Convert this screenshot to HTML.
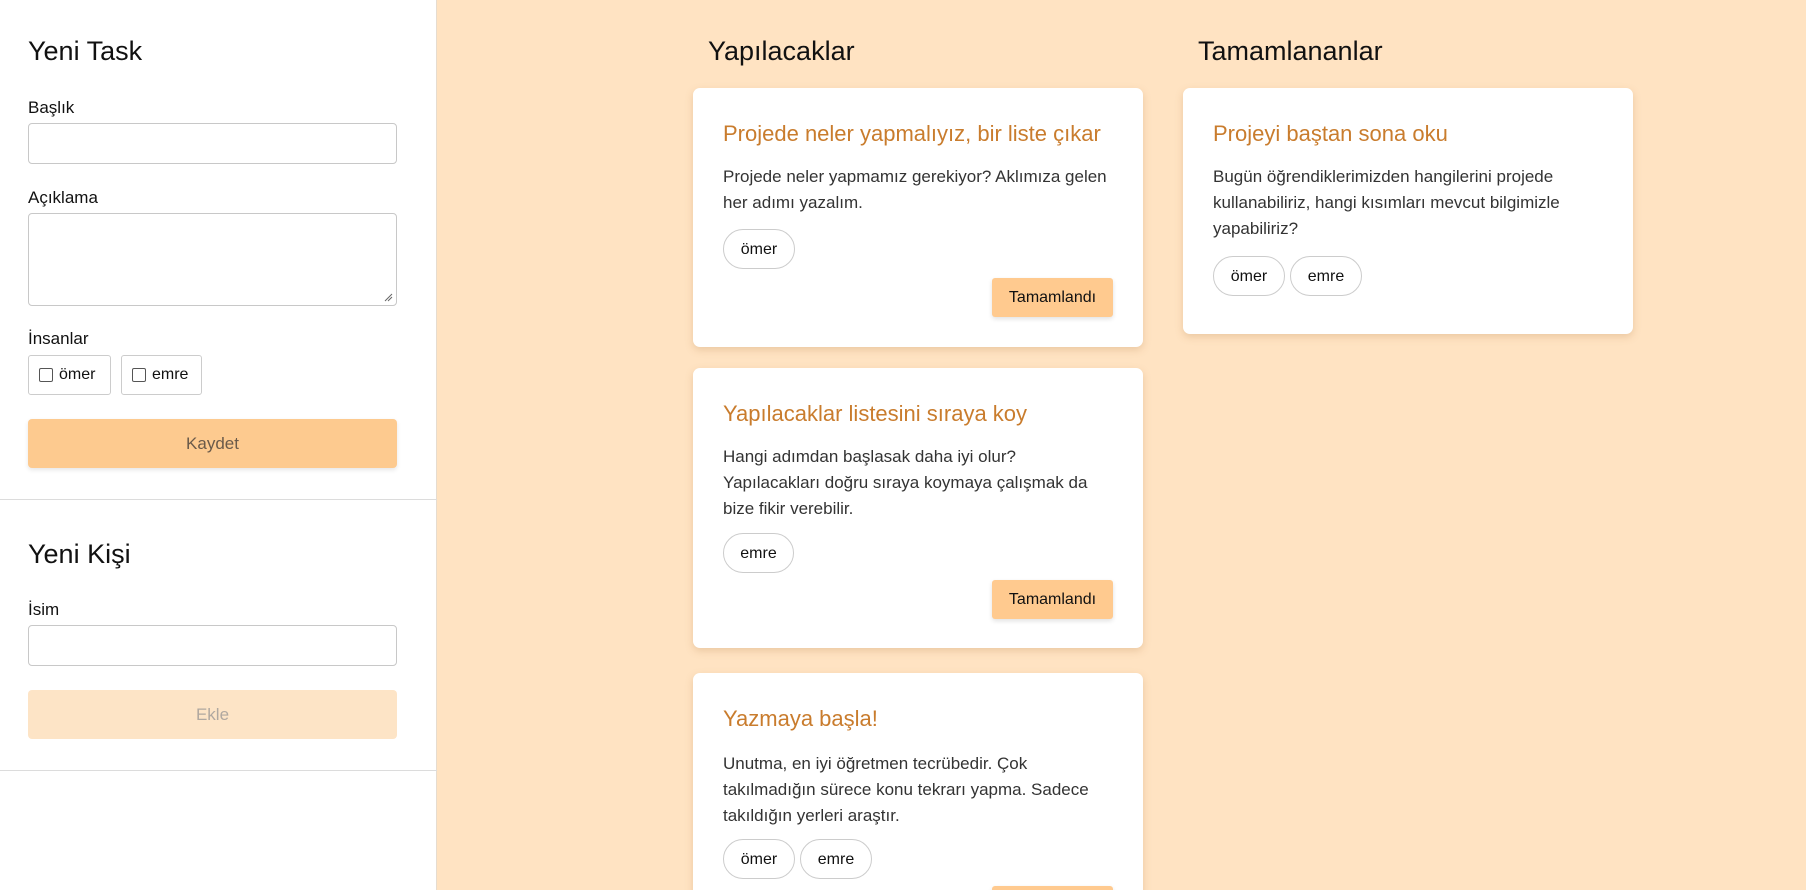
<!DOCTYPE html>
<html style="overflow:hidden;height:890px"><head><meta charset="utf-8"><style>
*{box-sizing:border-box;margin:0;padding:0}
body{width:1806px;height:890px;overflow:hidden;background:#ffe3c2;font-family:"Liberation Sans",sans-serif;position:relative}
.side{position:absolute;left:0;top:0;width:437px;height:890px;background:#fff;border-right:1px solid #e6dccf}
.a{position:absolute;white-space:nowrap}
h2{font-weight:normal;font-size:27px;color:#111}
.lbl{font-size:17px;color:#111}
.inp{position:absolute;left:28px;width:369px;border:1px solid #c8c8c8;border-radius:4px;background:#fff}
.btn{position:absolute;left:28px;width:369px;height:49px;border-radius:4px;display:flex;align-items:center;justify-content:center;font-size:17px}
.hr{position:absolute;left:0;width:437px;height:1px;background:#dcdcdc}
.cb{position:absolute;top:355px;height:40px;border:1px solid #ccc;border-radius:3px;display:flex;align-items:center;padding-left:10px;font-size:16px;color:#111}
.cb i{display:inline-block;width:14px;height:14px;border:1px solid #555;border-radius:2px;margin-right:6px}
.card{position:absolute;background:#fff;border-radius:7px;box-shadow:0 3px 8px rgba(190,140,90,.3)}
.t{position:absolute;left:30px;font-size:22px;color:#c97c2d;white-space:nowrap}
.d{position:absolute;left:30px;font-size:17px;line-height:26px;color:#333;white-space:nowrap}
.chip{position:absolute;height:40px;border:1px solid #ccc;border-radius:20px;font-size:16px;color:#111;display:flex;align-items:center;justify-content:center;padding-top:2px}
.done{position:absolute;left:299px;width:121px;height:39px;background:#ffca8f;border-radius:3px;font-size:16px;color:#111;display:flex;align-items:center;justify-content:center;box-shadow:0 2px 5px rgba(0,0,0,.12)}
</style></head><body>
<div class="side">
<h2 class="a" style="left:28px;top:36px">Yeni Task</h2>
<div class="a lbl" style="left:28px;top:98px">Başlık</div>
<div class="inp" style="top:123px;height:41px"></div>
<div class="a lbl" style="left:28px;top:188px">Açıklama</div>
<div class="inp" style="top:213px;height:93px"><svg style="position:absolute;right:3px;bottom:3px" width="9" height="9"><path d="M1 8L8 1M4 8L8 4" stroke="#666" stroke-width="1"/></svg></div>
<div class="a lbl" style="left:28px;top:329px">İnsanlar</div>
<div class="cb" style="left:28px;width:83px"><i></i>ömer</div>
<div class="cb" style="left:121px;width:81px"><i></i>emre</div>
<div class="btn" style="top:419px;background:#fdca8f;color:#6a5a4a;box-shadow:0 2px 5px rgba(0,0,0,.1)">Kaydet</div>
<div class="hr" style="top:499px"></div>
<h2 class="a" style="left:28px;top:539px">Yeni Kişi</h2>
<div class="a lbl" style="left:28px;top:600px">İsim</div>
<div class="inp" style="top:625px;height:41px"></div>
<div class="btn" style="top:690px;background:#fde4c6;color:#b0a8a0">Ekle</div>
<div class="hr" style="top:770px"></div>
</div>

<h2 class="a" style="left:708px;top:36px">Yapılacaklar</h2>
<h2 class="a" style="left:1198px;top:36px">Tamamlananlar</h2>

<div class="card" style="left:693px;top:88px;width:450px;height:259px">
<div class="t" style="top:33px">Projede neler yapmalıyız, bir liste çıkar</div>
<div class="d" style="top:76px">Projede neler yapmamız gerekiyor? Aklımıza gelen<br>her adımı yazalım.</div>
<div class="chip" style="left:30px;top:141px;width:72px">ömer</div>
<div class="done" style="top:190px">Tamamlandı</div>
</div>

<div class="card" style="left:693px;top:368px;width:450px;height:280px">
<div class="t" style="top:33px">Yapılacaklar listesini sıraya koy</div>
<div class="d" style="top:76px">Hangi adımdan başlasak daha iyi olur?<br>Yapılacakları doğru sıraya koymaya çalışmak da<br>bize fikir verebilir.</div>
<div class="chip" style="left:30px;top:165px;width:71px">emre</div>
<div class="done" style="top:212px">Tamamlandı</div>
</div>

<div class="card" style="left:693px;top:673px;width:450px;height:240px;overflow:hidden">
<div class="t" style="top:33px">Yazmaya başla!</div>
<div class="d" style="top:78px">Unutma, en iyi öğretmen tecrübedir. Çok<br>takılmadığın sürece konu tekrarı yapma. Sadece<br>takıldığın yerleri araştır.</div>
<div class="chip" style="left:30px;top:166px;width:72px">ömer</div>
<div class="chip" style="left:107px;top:166px;width:72px">emre</div>
<div class="done" style="top:213px">Tamamlandı</div>
</div>

<div class="card" style="left:1183px;top:88px;width:450px;height:246px">
<div class="t" style="top:33px">Projeyi baştan sona oku</div>
<div class="d" style="top:76px">Bugün öğrendiklerimizden hangilerini projede<br>kullanabiliriz, hangi kısımları mevcut bilgimizle<br>yapabiliriz?</div>
<div class="chip" style="left:30px;top:168px;width:72px">ömer</div>
<div class="chip" style="left:107px;top:168px;width:72px">emre</div>
</div>
</body></html>
